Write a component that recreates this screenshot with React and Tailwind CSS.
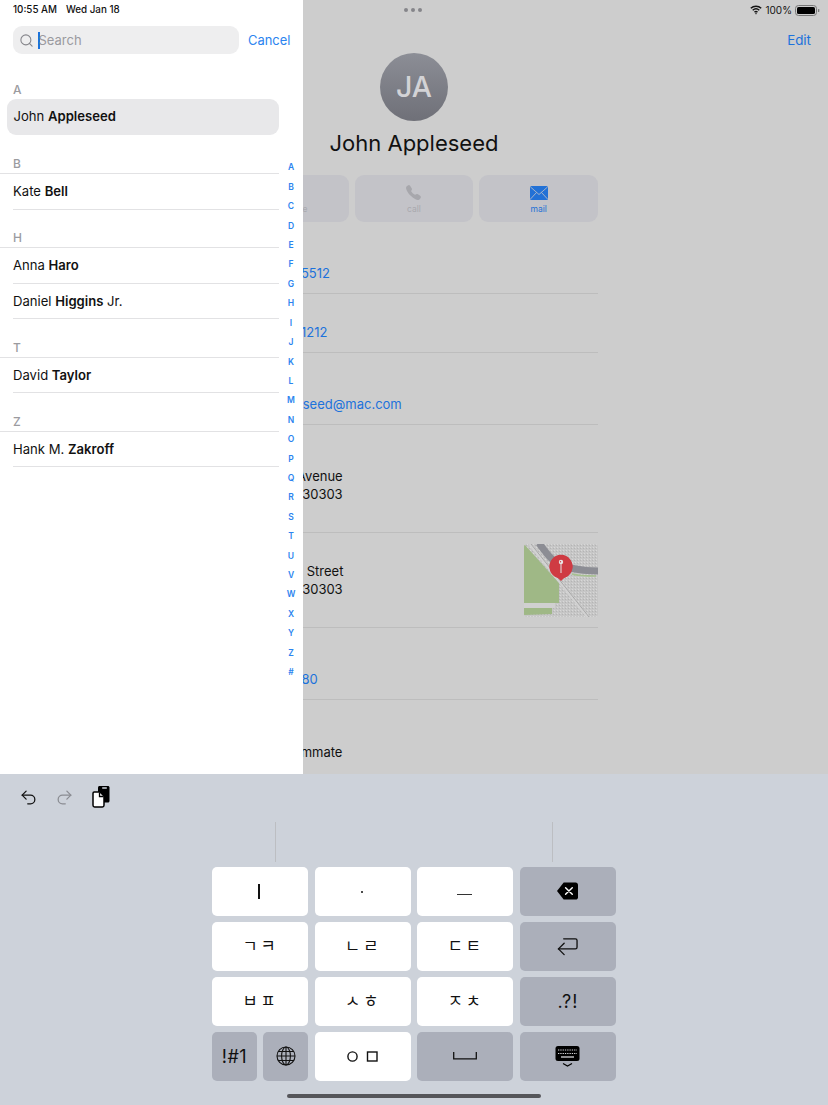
import React from "react";
import { Undo2, Redo2, Search } from "lucide-react";
import { IoCall } from "react-icons/io5";

const font = "font-['Inter','Noto_Sans_CJK_KR',sans-serif]";

function Wifi() {
  return (
    <svg width="12" height="10" viewBox="0 0 12 10" fill="none" stroke="#111" strokeWidth="1.5">
      <path d="M0.8 3.2C3.7 .6 8.3 .6 11.2 3.2" />
      <path d="M2.7 5.2C4.6 3.6 7.4 3.6 9.3 5.2" />
      <path d="M4.5 7.1C5.4 6.4 6.6 6.4 7.5 7.1" />
      <path d="M6 9.6L4.9 8.3H7.1Z" fill="#111" stroke="none" />
    </svg>
  );
}

function Battery() {
  return (
    <svg width="25" height="11" viewBox="0 0 25 11">
      <rect x="0.5" y="0.5" width="21" height="10" rx="3" fill="none" stroke="#777" />
      <rect x="2" y="2" width="18" height="7" rx="1.6" fill="#000" />
      <rect x="23" y="4" width="1.3" height="3" rx="0.6" fill="#777" />
    </svg>
  );
}

function MapThumb() {
  return (
    <svg width="74" height="73" viewBox="0 0 74 73" className="rounded-[3px] shrink-0">
      <defs>
        <pattern id="dots" width="3" height="3" patternUnits="userSpaceOnUse">
          <rect width="3" height="3" fill="#c6c6c6" />
          <rect width="1" height="1" fill="#d8d8d8" />
          <rect x="2" y="1" width="1" height="1" fill="#b4b4b4" />
        </pattern>
      </defs>
      <rect width="74" height="73" fill="url(#dots)" />
      <path d="M0 0L35 39L35 59H0Z" fill="#9fb886" />
      <path d="M0 64H28V70L0 71Z" fill="#9fb886" />
      <path d="M0 59H31V64H0Z" fill="#d0d0d0" />
      <path d="M6 0L64 73" stroke="#d2d2d2" strokeWidth="3" />
      <path d="M7 0L65 73" stroke="#a8a8a8" strokeWidth="1" />
      <path d="M15 -1C24 12 30 20 46 24C55 26 65 27 75 27" fill="none" stroke="#8c8d94" strokeWidth="7" />
      <path d="M48 30C55 32 64 32 72 32" fill="none" stroke="#a6c090" strokeWidth="1.5" />
      <path d="M37 37L33.5 33.5A11.6 11.6 0 1 1 40.5 33.5Z" fill="#cf3b43" />
      <circle cx="37" cy="23" r="11.4" fill="#cf3b43" />
      <rect x="36.5" y="18" width="1" height="11" fill="#e6e6e6" />
      <circle cx="37" cy="18" r="2.2" fill="#e6e6e6" />
      <circle cx="36.5" cy="17.7" r="0.7" fill="#cf3b43" />
    </svg>
  );
}

function Label({ children }) {
  return <div className="text-[12px] leading-[16px] text-[#222]">{children}</div>;
}

function DetailRow({ label, value, height, inset = "" }) {
  return (
    <div className={`${height} pb-[11px] flex flex-col justify-end border-b border-[#bdbdbd]`}>
      <Label>{label}</Label>
      <div className={`text-[13px] leading-[18px] whitespace-nowrap text-[#1c72dc] ${inset}`}>{value}</div>
    </div>
  );
}

function ActionButton({ icon, label, color }) {
  return (
    <div className="h-[47px] rounded-[9px] bg-[#c3c3c8] flex flex-col items-center pt-[9px]">
      <div className="h-[17px] flex items-center justify-center">{icon}</div>
      <div className={`text-[8.5px] leading-[11px] mt-[3px] ${color}`}>{label}</div>
    </div>
  );
}

function Detail() {
  return (
    <div className="h-[774px] bg-[#cdcdcd] overflow-hidden">
      <div className="h-[20px] grid grid-cols-3 items-center px-[8px]">
        <div />
        <div className="flex justify-center gap-[3px] pr-[1px]">
          <span className="w-[4px] h-[4px] rounded-full bg-[#85858a]" />
          <span className="w-[4px] h-[4px] rounded-full bg-[#85858a]" />
          <span className="w-[4px] h-[4px] rounded-full bg-[#85858a]" />
        </div>
        <div className="flex justify-end items-center gap-[3px]">
          <Wifi />
          <span className="text-[10px] text-[#111]">100%</span>
          <Battery />
        </div>
      </div>
      <div className="h-[33px] flex justify-end pr-[17px] pt-[11px] text-[13.4px] leading-[18px] text-[#1c72dc]">Edit</div>
      <div className="flex flex-col items-center">
        <div className="w-[68px] h-[68px] rounded-full bg-gradient-to-b from-[#8c8e96] to-[#6f7078] flex items-center justify-center text-[28.5px] font-medium text-[#d3d3d6]">JA</div>
        <div className="mt-[7px] text-[22px] leading-[30px] text-[#111]">John Appleseed</div>
      </div>
      <div className="mx-auto w-[368px] mt-[17px]">
        <div className="grid grid-cols-3 gap-[6px]">
          <ActionButton icon={<IoCall size={16} />} label="message" color="text-[#a9a9ae]" />
          <ActionButton icon={<IoCall size={17} color="#a7a7ac" />} label="call" color="text-[#a9a9ae]" />
          <ActionButton
            icon={
              <svg width="18" height="14" viewBox="0 0 18 14">
                <rect width="18" height="14" rx="1.5" fill="#2271d6" />
                <path d="M0.5 1L9 8.5L17.5 1M0.5 13L6.5 6.5M17.5 13L11.5 6.5" fill="none" stroke="#c3c3c8" strokeWidth="0.8" />
              </svg>
            }
            label="mail"
            color="text-[#2271d6]"
          />
        </div>
        <DetailRow height="h-[72px]" label="mobile" value="(888) 555-5512" inset="pl-[4px]" />
        <DetailRow height="h-[59px]" label="home" value="(888) 555-1212" inset="pl-[4px]" />
        <DetailRow height="h-[72px]" label="work" value="John-Appleseed@mac.com" inset="pl-[1px]" />
        <div className="h-[108px] pb-[29px] flex flex-col justify-end border-b border-[#bdbdbd] text-[13px] leading-[18px] text-[#111]">
          <Label>work</Label>
          <div>3494 Kuhl Avenue</div>
          <div>Atlanta, GA 30303</div>
        </div>
        <div className="h-[95px] flex items-center justify-between border-b border-[#bdbdbd] text-[13px] leading-[18px] text-[#111]">
          <div className="pb-[16px]">
            <Label>home</Label>
            <div className="pl-[2px]">1234 Laurel Street</div>
            <div>Atlanta, GA 30303</div>
          </div>
          <MapThumb />
        </div>
        <DetailRow height="h-[72px]" label="birthday" value="June 3, 1980" inset="pl-[9px]" />
        <div className="pt-[34px] text-[13px] leading-[18px] text-[#111]">
          <Label>notes</Label>
          <div className="-mt-[7px]">College roommate</div>
        </div>
      </div>
    </div>
  );
}

const sections = [
  { h: "A", rows: [["John", "Appleseed", ""]] },
  { h: "B", rows: [["Kate", "Bell", ""]] },
  { h: "H", rows: [["Anna", "Haro", ""], ["Daniel", "Higgins", " Jr."]] },
  { h: "T", rows: [["David", "Taylor", ""]] },
  { h: "Z", rows: [["Hank M.", "Zakroff", ""]] },
];

const letters = "ABCDEFGHIJKLMNOPQRSTUVWXYZ#".split("");

function Sidebar() {
  return (
    <div className="absolute left-0 top-0 w-[303px] h-[774px] bg-white flex flex-col">
      <div className="h-[20px] pl-[13px] flex items-center gap-[9px] text-[9.8px] font-medium text-[#111]">
        <span>10:55 AM</span>
        <span>Wed Jan 18</span>
      </div>
      <div className="mt-[6px] pl-[13px] flex items-center">
        <div className="w-[226px] h-[28px] rounded-[9px] bg-[#eeeeef] flex items-center pl-[6px]">
          <Search size={15} color="#85858a" strokeWidth={1.7} />
          <div className="ml-[4px] w-[1.5px] h-[17px] bg-[#1c72dc]" />
          <span className="-ml-[1px] pt-[1px] text-[13px] text-[#9a9a9f]">Search</span>
        </div>
        <span className="ml-[9px] pt-[1px] text-[12.9px] text-[#2b84ef]">Cancel</span>
      </div>
      <div className="flex">
        <div className="w-[279px]">
          <div className="pt-[6.5px]">
            {sections.map((s, si) => (
              <div key={s.h} className={si === 0 ? "mb-[1px]" : ""}>
                <div className={`h-[38.5px] pl-[13px] flex items-end pb-[1px] text-[12px] leading-[16px] font-medium text-[#9b9b9f] ${si === 0 ? "" : "border-b border-[#e2e2e4]"}`}>{s.h}</div>
                {s.rows.map((r) => (
                  <div
                    key={r[1]}
                    className={`h-[35.5px] flex items-center text-[13.1px] text-[#111] whitespace-pre ${si === 0 ? "ml-[7px] pl-[6.5px] pt-[1px] rounded-[9px] bg-[#e8e8ea]" : "ml-[13px] pt-[2px] border-b border-[#e2e2e4]"}`}
                  >
                    {r[0]} <span className="font-semibold">{r[1]}</span>{r[2]}
                  </div>
                ))}
              </div>
            ))}
          </div>
        </div>
        <div className="w-[24px] pt-[104px] flex flex-col items-center">
          {letters.map((l) => (
            <div key={l} className="h-[19.42px] flex items-center text-[8.5px] leading-none font-semibold text-[#2b84ef]">{l}</div>
          ))}
        </div>
      </div>
    </div>
  );
}

function Key({ children, dark, className = "" }) {
  return (
    <div className={`h-[48.5px] rounded-[5px] flex items-center justify-center text-[#111] ${dark ? "bg-[#abafba]" : "bg-white"} ${className}`}>
      {children}
    </div>
  );
}

function Jamo({ a, b }) {
  return (
    <div className="flex gap-[3px] -ml-[2px] text-[16.5px] leading-none">
      <span>{a}</span>
      <span>{b}</span>
    </div>
  );
}

function Globe() {
  return (
    <svg width="20" height="20" viewBox="0 0 20 20" fill="none" stroke="#111" strokeWidth="1.1">
      <circle cx="10" cy="10" r="9" />
      <ellipse cx="10" cy="10" rx="4.4" ry="9" />
      <path d="M10 1V19M1 10H19M2.2 5.5H17.8M2.2 14.5H17.8" />
    </svg>
  );
}

function Keyboard() {
  return (
    <div className="h-[331px] bg-[#cdd2da] flex flex-col">
      <div className="h-[46px] flex items-center pl-[19px]">
        <Undo2 size={19} color="#111" strokeWidth={1.6} />
        <Redo2 size={19} color="#8a8c92" strokeWidth={1.6} className="ml-[17px]" />
        <svg width="18" height="22" viewBox="0 0 18 22" className="ml-[18px]">
          <path d="M6 1.5C6 .7 6.7 0 7.5 0H16C16.8 0 17.5 .7 17.5 1.5V15C17.5 15.8 16.8 16.5 16 16.5H6Z" fill="#000" />
          <rect x="10" y="1.3" width="5" height="1.4" rx=".7" fill="#cdd2da" />
          <path d="M1 7.2C1 6.5 1.5 6 2.2 6H8L12 10V19.3C12 20.2 11.3 21 10.4 21H2.6C1.7 21 1 20.2 1 19.3Z" fill="#fff" stroke="#000" strokeWidth="1.5" />
          <path d="M7.5 6.5V10.5H11.5" fill="none" stroke="#000" strokeWidth="1.3" />
        </svg>
      </div>
      <div className="h-[47px] pt-[2px] pb-[5px] flex justify-center gap-[276px]">
        <div className="w-px bg-[#bcbec2]" />
        <div className="w-px bg-[#bcbec2]" />
      </div>
      <div className="w-[404px] mx-auto grid grid-cols-4 gap-x-[6.5px] gap-y-[6.5px]">
        <Key><span className="w-[1.5px] h-[15px] bg-[#111] -ml-[2px]" /></Key>
        <Key><span className="w-[2px] h-[2px] rounded-full bg-[#111] mt-[2px] -ml-[2px]" /></Key>
        <Key><span className="w-[15px] h-[1.5px] bg-[#333] mt-[6px] -ml-[1px]" /></Key>
        <Key dark>
          <svg width="21" height="18" viewBox="0 0 22 18">
            <path d="M7 0H19.5C20.9 0 22 1.1 22 2.5V15.5C22 16.9 20.9 18 19.5 18H7L0 9Z" fill="#000" />
            <path d="M9 5.5L16 12.5M16 5.5L9 12.5" stroke="#fff" strokeWidth="1.5" strokeLinecap="round" />
          </svg>
        </Key>
        <Key><Jamo a="ㄱ" b="ㅋ" /></Key>
        <Key><Jamo a="ㄴ" b="ㄹ" /></Key>
        <Key><Jamo a="ㄷ" b="ㅌ" /></Key>
        <Key dark>
          <svg width="21" height="19" viewBox="0 0 22 19" fill="none" stroke="#111" strokeWidth="1.4" strokeLinecap="round" strokeLinejoin="round">
            <path d="M7 1.5H19.3C20.2 1.5 21 2.2 21 3.1V10.4C21 11.3 20.2 12 19.3 12H1.5" />
            <path d="M7.5 6L1.5 12L7.5 18" />
          </svg>
        </Key>
        <Key><Jamo a="ㅂ" b="ㅍ" /></Key>
        <Key><Jamo a="ㅅ" b="ㅎ" /></Key>
        <Key><Jamo a="ㅈ" b="ㅊ" /></Key>
        <Key dark><span className="text-[18px] tracking-[1px]">.?!</span></Key>
        <div className="grid grid-cols-2 gap-x-[6.5px]">
          <Key dark className="text-[18px] tracking-[0.5px]">!#1</Key>
          <Key dark><Globe /></Key>
        </div>
        <Key>
          <svg width="31" height="11" viewBox="0 0 31 11" fill="none" stroke="#111" strokeWidth="1.4">
            <circle cx="5.5" cy="5.5" r="4.6" />
            <rect x="20.5" y="1" width="9.5" height="9" />
          </svg>
        </Key>
        <Key dark>
          <svg width="24" height="8" viewBox="0 0 24 8" fill="none" stroke="#111" strokeWidth="1.3">
            <path d="M.7 0V6.8H23.3V0" />
          </svg>
        </Key>
        <Key dark>
          <svg width="25" height="21" viewBox="0 0 25 21" className="mt-[1px]">
            <rect x="0.5" width="24" height="15" rx="2.5" fill="#000" />
            <path d="M3 4H22M3 7.5H22" stroke="#d8d8dc" strokeWidth="1.2" strokeDasharray="1.3 1" />
            <path d="M6 11H19" stroke="#d8d8dc" strokeWidth="1.3" />
            <path d="M8 17.5L12.5 20L17 17.5" fill="none" stroke="#000" strokeWidth="1.2" />
          </svg>
        </Key>
      </div>
      <div className="mt-[13px] mx-auto w-[254px] h-[4.5px] rounded-full bg-[#55565a]" />
    </div>
  );
}

export default function App() {
  return (
    <div className={`relative w-[828px] h-[1105px] overflow-hidden ${font}`}>
      <Detail />
      <Sidebar />
      <Keyboard />
    </div>
  );
}
